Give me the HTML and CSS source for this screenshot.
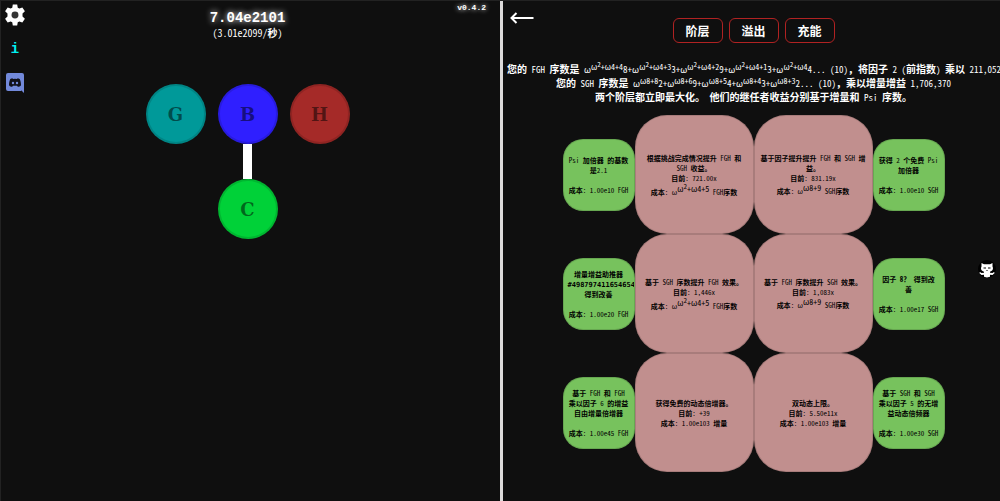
FILE: index.html
```html
<!DOCTYPE html>
<html lang="zh-CN">
<head>
<meta charset="utf-8">
<meta name="viewport" content="width=device-width, initial-scale=1">
<title>增量</title>
<link rel="stylesheet" href="styles.css">
</head>
<body>
<main class="split">
  <section class="pane pane-tree">
    <nav class="side">
      <button class="icon-btn" aria-label="设置">
        <svg width="22" height="22" viewBox="0 0 24 24"><path fill="#fff" fill-rule="evenodd" d="M9.600 .5h4.800l.6 3.500 1.800 1 3.200-1.200L22.800 8l-2.600 2.400v3.200l2.600 2.400-2.800 4.200-3.200-1.200-1.800 1-.6 3.500H9.600L9 20l-1.800-1L4 20.200 1.200 16l2.600-2.400v-3.200L1.200 8 4 3.800 7.200 5 9 4z"/><circle cx="12" cy="12" r="3.800" fill="#333"/></svg>
      </button>
      <button class="icon-btn info" aria-label="信息">i</button>
      <a class="icon-btn" href="#" aria-label="Discord">
        <svg width="18" height="20" viewBox="0 0 18 20"><path fill="#7289da" d="M2 0h14a2 2 0 0 1 2 2v18l-3-3 .4 1H2a2 2 0 0 1-2-2V2a2 2 0 0 1 2-2z"/><path fill="#101018" d="M6.500 5.200C5 5.400 4.300 6 4.300 6 3.400 8 3 10 3 12.300c.8 1 2 1.500 3.200 1.500l.8-1h4l.8 1c1.200 0 2.400-.5 3.200-1.500 0-2.300-.4-4.300-1.300-6.300 0 0-.7-.6-2.200-.8l-.4.7a9 9 0 0 0-4.200 0z"/><circle cx="7" cy="10" r="1.200" fill="#7289da"/><circle cx="11" cy="10" r="1.200" fill="#7289da"/></svg>
      </a>
    </nav>
    <div class="tree-main">
      <header class="points">
        <h1>7.04e2101</h1>
        <p>(3.01e2099/<b>秒</b>)</p>
      </header>
      <div class="tree">
        <button class="node node-g">G</button>
        <button class="node node-b">B</button>
        <button class="node node-h">H</button>
        <span class="link"></span>
        <button class="node node-c">C</button>
      </div>
    </div>
    <span class="version">v0.4.2</span>
  </section>

  <section class="pane pane-layer">
    <button class="back" aria-label="返回">
      <svg width="24" height="12" viewBox="0 0 24 12" fill="none" stroke="#fff" stroke-width="2"><path d="M23.500 6H2M6.500 1 1.500 6l5 5"/></svg>
    </button>
    <nav class="tabs">
      <button>阶层</button>
      <button>溢出</button>
      <button>充能</button>
    </nav>
    <div class="status">
      <p>您的<span class="n"> FGH </span>序数是<span class="n"> ω<sup>ω<sup>2</sup>+ω4+4</sup>8+ω<sup>ω<sup>2</sup>+ω4+3</sup>3+ω<sup>ω<sup>2</sup>+ω4+2</sup>9+ω<sup>ω<sup>2</sup>+ω4+1</sup>3+ω<sup>ω<sup>2</sup>+ω4</sup>4... (10)</span>，将因子<span class="n"> 2 (</span>前指数<span class="n">) </span>乘以<span class="n"> 211,052</span></p>
      <p>您的<span class="n"> SGH </span>序数是<span class="n"> ω<sup>ω8+8</sup>2+ω<sup>ω8+6</sup>9+ω<sup>ω8+5</sup>4+ω<sup>ω8+4</sup>3+ω<sup>ω8+3</sup>2... (10)</span>，乘以增量增益<span class="n"> 1,706,370</span></p>
      <p>两个阶层都立即最大化。<span class="n"> </span>他们的继任者收益分别基于增量和<span class="n"> Psi </span>序数。</p>
    </div>
    <div class="upgrades">
      <button class="up small"><span><span class="n">Psi </span>加倍器 的基数是<span class="n">2.1</span><br><br>成本<span class="n">: 1.00e10 FGH</span></span></button>
      <button class="up big"><span>根据挑战完成情况提升<span class="n"> FGH </span>和<span class="n"> SGH </span>收益。<br>目前<span class="n">: 721.00x</span><span class="cost">成本<span class="n">: ω<sup>ω<sup>2</sup>+ω4+5</sup> FGH</span>序数</span></span></button>
      <button class="up big"><span>基于因子提升提升<span class="n"> FGH </span>和<span class="n"> SGH </span>增益。<br>目前<span class="n">: 831.19x</span><span class="cost">成本<span class="n">: ω<sup>ω8+9</sup> SGH</span>序数</span></span></button>
      <button class="up small"><span>获得<span class="n"> 2 </span>个免费<span class="n"> Psi </span>加倍器<br><br>成本<span class="n">: 1.00e10 SGH</span></span></button>

      <button class="up small"><span>增量增益助推器<br><b>#498797411654654</b><br>得到改善<br><br>成本<span class="n">: 1.00e20 FGH</span></span></button>
      <button class="up big"><span>基于<span class="n"> SGH </span>序数提升<span class="n"> FGH </span>效果。<br>目前<span class="n">: 1,446x</span><span class="cost">成本<span class="n">: ω<sup>ω<sup>2</sup>+ω4+5</sup> FGH</span>序数</span></span></button>
      <button class="up big"><span>基于<span class="n"> FGH </span>序数提升<span class="n"> SGH </span>效果。<br>目前<span class="n">: 1,083x</span><span class="cost">成本<span class="n">: ω<sup>ω8+9</sup> SGH</span>序数</span></span></button>
      <button class="up small"><span>因子 8？ 得到改<br>善<br><br>成本<span class="n">: 1.00e17 SGH</span></span></button>

      <button class="up small"><span>基于<span class="n"> FGH </span>和<span class="n"> FGH </span>乘以因子<span class="n"> 6 </span>的增益自由增量倍增器<br><br>成本<span class="n">: 1.00e45 FGH</span></span></button>
      <button class="up big"><span>获得免费的动态倍增器。<br>目前<span class="n">: +39</span><br>成本<span class="n">: 1.00e103 </span>增量</span></button>
      <button class="up big"><span>双动态上限。<br>目前<span class="n">: 5.50e11x</span><br>成本<span class="n">: 1.00e103 </span>增量</span></button>
      <button class="up small"><span>基于<span class="n"> SGH </span>和<span class="n"> SGH </span>乘以因子<span class="n"> 5 </span>的无增益动态倍频器<br><br>成本<span class="n">: 1.00e30 SGH</span></span></button>
    </div>
    <a class="github" href="#" aria-label="GitHub">
      <svg width="18" height="18" viewBox="0 0 18 18"><circle cx="9" cy="9" r="9" fill="#000"/><path fill="#fff" d="M3.500 3 6 4.300h6L14.500 3v3.500c1 2 .5 4.500-2.500 5.200v1l2.500.2 1.500-.8.7.8-2.200 2.200-2.500-.3v2l-3 .6-3-.6v-2l-2.500.3-2.200-2.200.7-.8 1.500.8 2.500-.2v-1C3 11 2.500 8.500 3.500 6.500z"/><path d="M5.500 8H8M10 8h2.500M8.500 10.500h1" stroke="#000" stroke-width="1"/></svg>
    </a>
  </section>
</main>
</body>
</html>
```
FILE: styles.css
```css
* { box-sizing: border-box; }

body {
  margin: 0;
  background: #0f0f0f;
  color: #fff;
  font-family: "Noto Sans Mono CJK SC", "Noto Sans CJK SC", sans-serif;
}

button {
  font-family: inherit;
  padding: 0;
  border: 0;
  background: none;
  color: inherit;
}

h1, p { margin: 0; }

.n { font-weight: normal; }

.split {
  display: grid;
  grid-template-columns: 1fr 1fr;
  min-height: 100vh;
  border-top: 1px solid #222;
}

.pane {
  position: relative;
  min-width: 0;
  overflow: hidden;
}

.pane-tree { border-left: 1px solid #222; }

.pane-layer {
  border-left: 3px solid #dcdada;
  padding: 17px 0 0 4px;
}

.side {
  position: absolute;
  top: 3px;
  left: 3px;
  display: flex;
  flex-direction: column;
}

.icon-btn {
  display: flex;
  align-items: center;
  justify-content: center;
  width: 22px;
  height: 22px;
  margin-bottom: 12px;
}

.info {
  color: #00f0f0;
  font: bold 14px "Liberation Mono", monospace;
}

.version {
  position: absolute;
  top: 2px;
  right: 14px;
  font: bold 8px/10px "Liberation Mono", monospace;
  text-shadow: 0 0 5px #fff;
}

.tree-main {
  display: flex;
  flex-direction: column;
  align-items: center;
  padding: 9px 6px 0 0;
}

.points { text-align: center; }

.points h1 {
  font: bold 14px/16px "Liberation Mono", monospace;
  text-shadow: 0 0 6px #fff;
}

.points p {
  font-size: 10px;
  line-height: 14px;
}

.tree {
  display: grid;
  grid-template-columns: repeat(3, 60px);
  column-gap: 12px;
  justify-items: center;
  margin-top: 44px;
}

.node {
  width: 60px;
  height: 60px;
  border: 2px solid rgba(0, 0, 0, 0.13);
  border-radius: 50%;
  color: rgba(0, 0, 0, 0.5);
  font: bold 18px "DejaVu Serif", serif;
}

.node-g { background: #009999; }
.node-b { background: #2f1fff; }
.node-h { background: #a52a28; }
.node-c { background: #00d138; grid-column: 2; }

.link {
  grid-column: 2;
  width: 9px;
  height: 35px;
  background: #fff;
}

.back {
  position: absolute;
  top: 11px;
  left: 7px;
  display: flex;
}

.tabs {
  display: flex;
  justify-content: center;
  gap: 6px;
}

.tabs button {
  width: 50px;
  height: 25px;
  border: 1px solid #b02222;
  border-radius: 6px;
  font-size: 12px;
  font-weight: bold;
  line-height: 16px;
}

.status {
  display: flex;
  flex-direction: column;
  align-items: center;
  padding-top: 19px;
  font-size: 10px;
  font-weight: bold;
}

.status .n {
  font-size: 9px;
  line-height: 0;
}

.status p {
  line-height: 14px;
  white-space: nowrap;
}

.status p:first-child { align-self: flex-start; }

sup {
  font-size: 8px;
  line-height: 0;
  vertical-align: 3px;
}

sup sup { font-size: 7px; }

.upgrades {
  display: grid;
  grid-template-columns: 72px 119px 119px 72px;
  justify-content: center;
  align-items: center;
  margin-top: 11px;
}

.up {
  display: flex;
  align-items: center;
  justify-content: center;
  border: 1px solid rgba(0, 0, 0, 0.13);
  color: #000;
  font-size: 7px;
  font-weight: bold;
  line-height: 10px;
  text-align: center;
}

.up b {
  font: bold 7px/8px "DejaVu Sans Mono", monospace;
}

.cost {
  display: block;
  margin-top: 3px;
}

.small {
  height: 72px;
  padding: 0 4px;
  overflow: hidden;
  border-radius: 20px;
  background: #77c25d;
}

.small > span { width: 100%; }

.big {
  height: 119px;
  padding: 0 5px;
  border-radius: 32px;
  background: #c18f8e;
}

.github {
  position: absolute;
  top: 259px;
  right: 4px;
  display: flex;
}
```
